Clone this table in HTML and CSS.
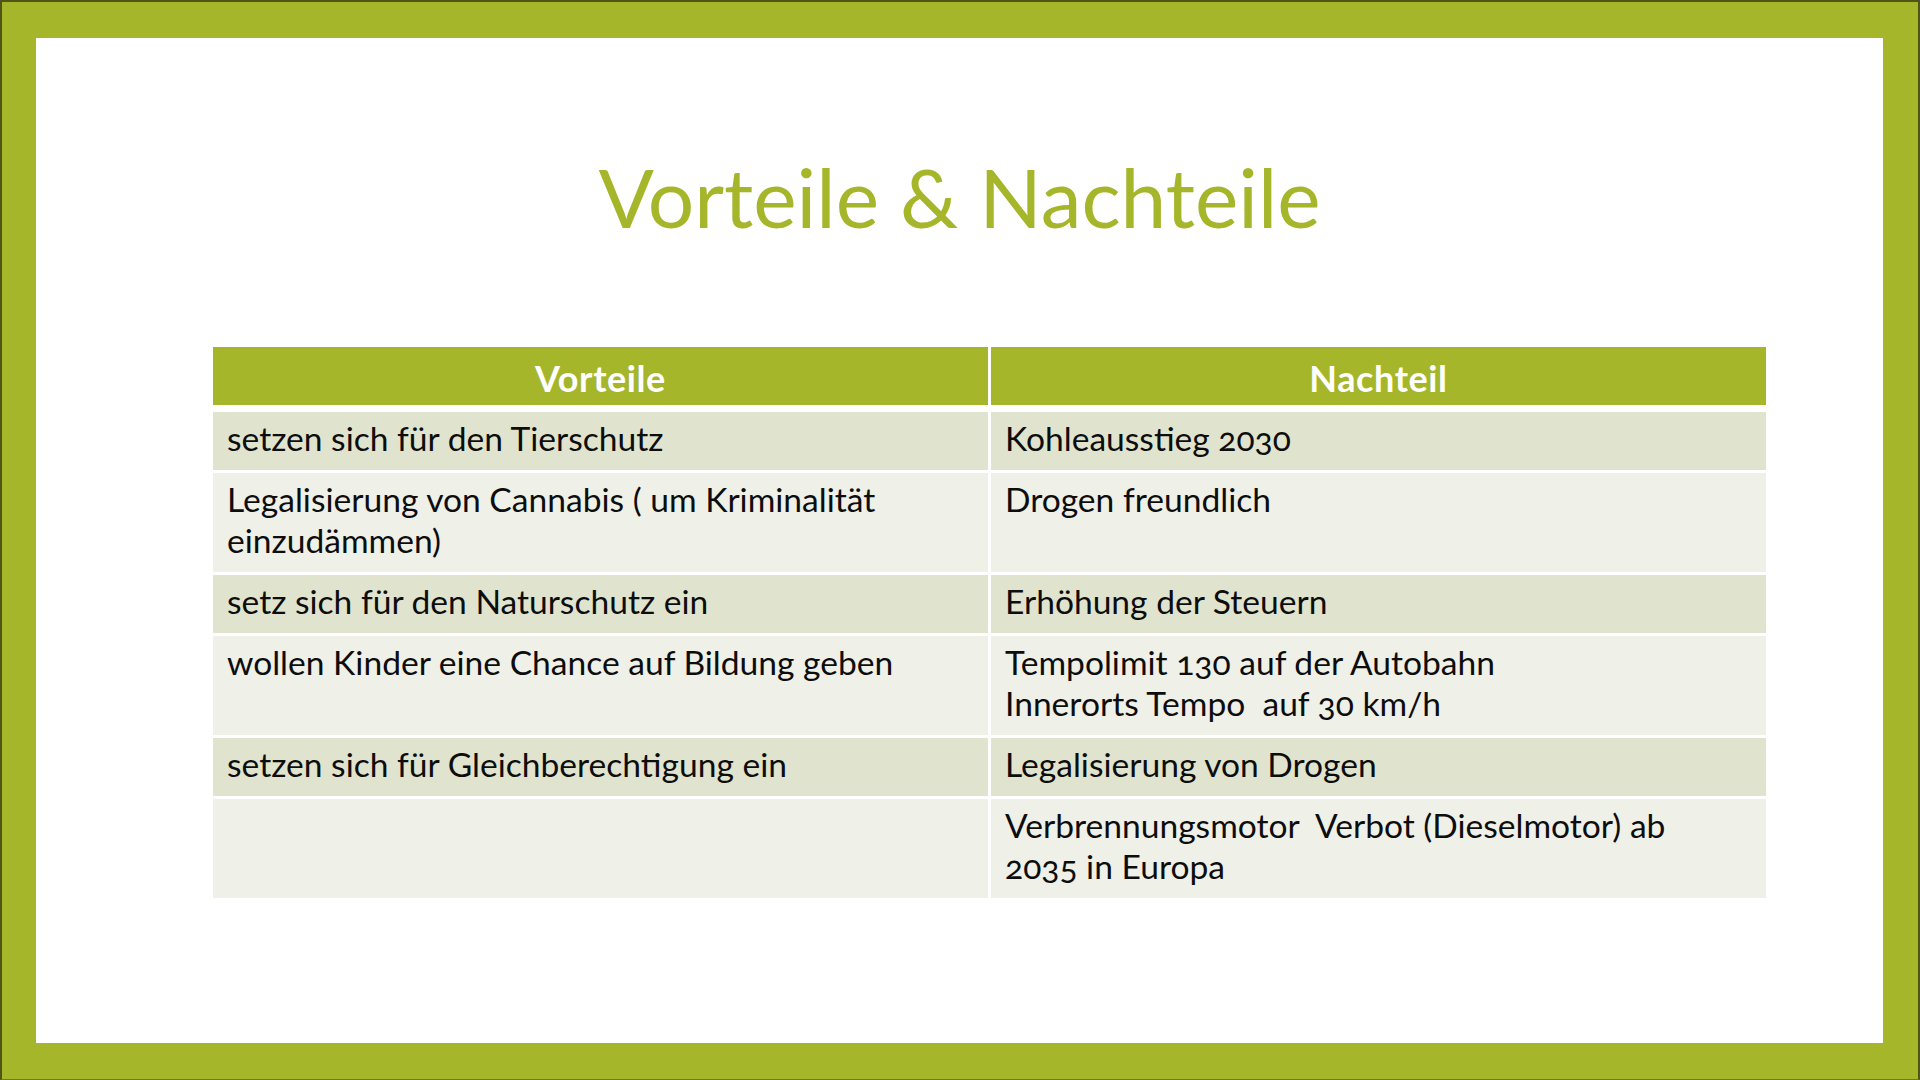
FILE: index.html
```html
<!DOCTYPE html>
<html lang="de">
<head>
<meta charset="utf-8">
<title>Vorteile &amp; Nachteile</title>
<link rel="stylesheet" href="styles.css">
</head>
<body>
<div class="frame">
  <div class="slide">
    <h1 class="title">Vorteile &amp; Nachteile</h1>
    <div class="grid">
      <div class="cell head">Vorteile</div>
      <div class="cell head">Nachteil</div>

      <div class="cell odd">setzen sich für den Tierschutz</div>
      <div class="cell odd">Kohleausstieg 2030</div>

      <div class="cell even">Legalisierung von Cannabis ( um Kriminalität<br>einzudämmen)</div>
      <div class="cell even">Drogen freundlich</div>

      <div class="cell odd">setz sich für den Naturschutz ein</div>
      <div class="cell odd">Erhöhung der Steuern</div>

      <div class="cell even">wollen Kinder eine Chance auf Bildung geben</div>
      <div class="cell even">Tempolimit 130 auf der Autobahn<br>Innerorts Tempo&nbsp; auf 30 km/h</div>

      <div class="cell odd">setzen sich für Gleichberechtigung ein</div>
      <div class="cell odd">Legalisierung von Drogen</div>

      <div class="cell even"></div>
      <div class="cell even">Verbrennungsmotor&nbsp; Verbot (Dieselmotor) ab<br>2035 in Europa</div>
    </div>
  </div>
</div>
</body>
</html>
```

FILE: styles.css
```css
html, body {
  margin: 0;
  padding: 0;
}

body {
  background: #a6b62b;
  font-family: "Lato", "Open Sans", "DejaVu Sans", sans-serif;
}

.frame {
  width: 1920px;
  height: 1080px;
  box-sizing: border-box;
  background: #a6b62b;
  border-top: 2px solid #4e5516;
  border-left: 2px solid #4e5516;
  border-right: 2px solid #4e5516;
  border-bottom: 1px solid #6f7a1c;
  padding: 36px 35px 36px 34px;
}

.slide {
  height: 100%;
  background: #ffffff;
  padding-top: 117px;
  box-sizing: border-box;
}

.title {
  margin: 0;
  text-align: center;
  font-weight: 400;
  font-size: 82px;
  line-height: 82px;
  color: #a6b62b;
  letter-spacing: 0;
}

.grid {
  margin: 110px 0 0 177px;
  width: 1553px;
  display: grid;
  grid-template-columns: 1fr 1fr;
  column-gap: 3px;
  row-gap: 3px;
}

.cell {
  padding: 6.5px 14px 10.5px 14px;
  font-size: 33.6px;
  line-height: 41px;
  color: #0d0d0d;
  font-variant-numeric: oldstyle-nums;
  min-height: 41px;
}

.head {
  background: #a6b62b;
  color: #ffffff;
  font-weight: 700;
  font-size: 36px;
  letter-spacing: 0.6px;
  text-align: center;
  padding-top: 10.5px;
  padding-bottom: 6.5px;
  margin-bottom: 3.5px;
}

.odd {
  background: #e0e4ce;
}

.even {
  background: #eff0e8;
}
```
